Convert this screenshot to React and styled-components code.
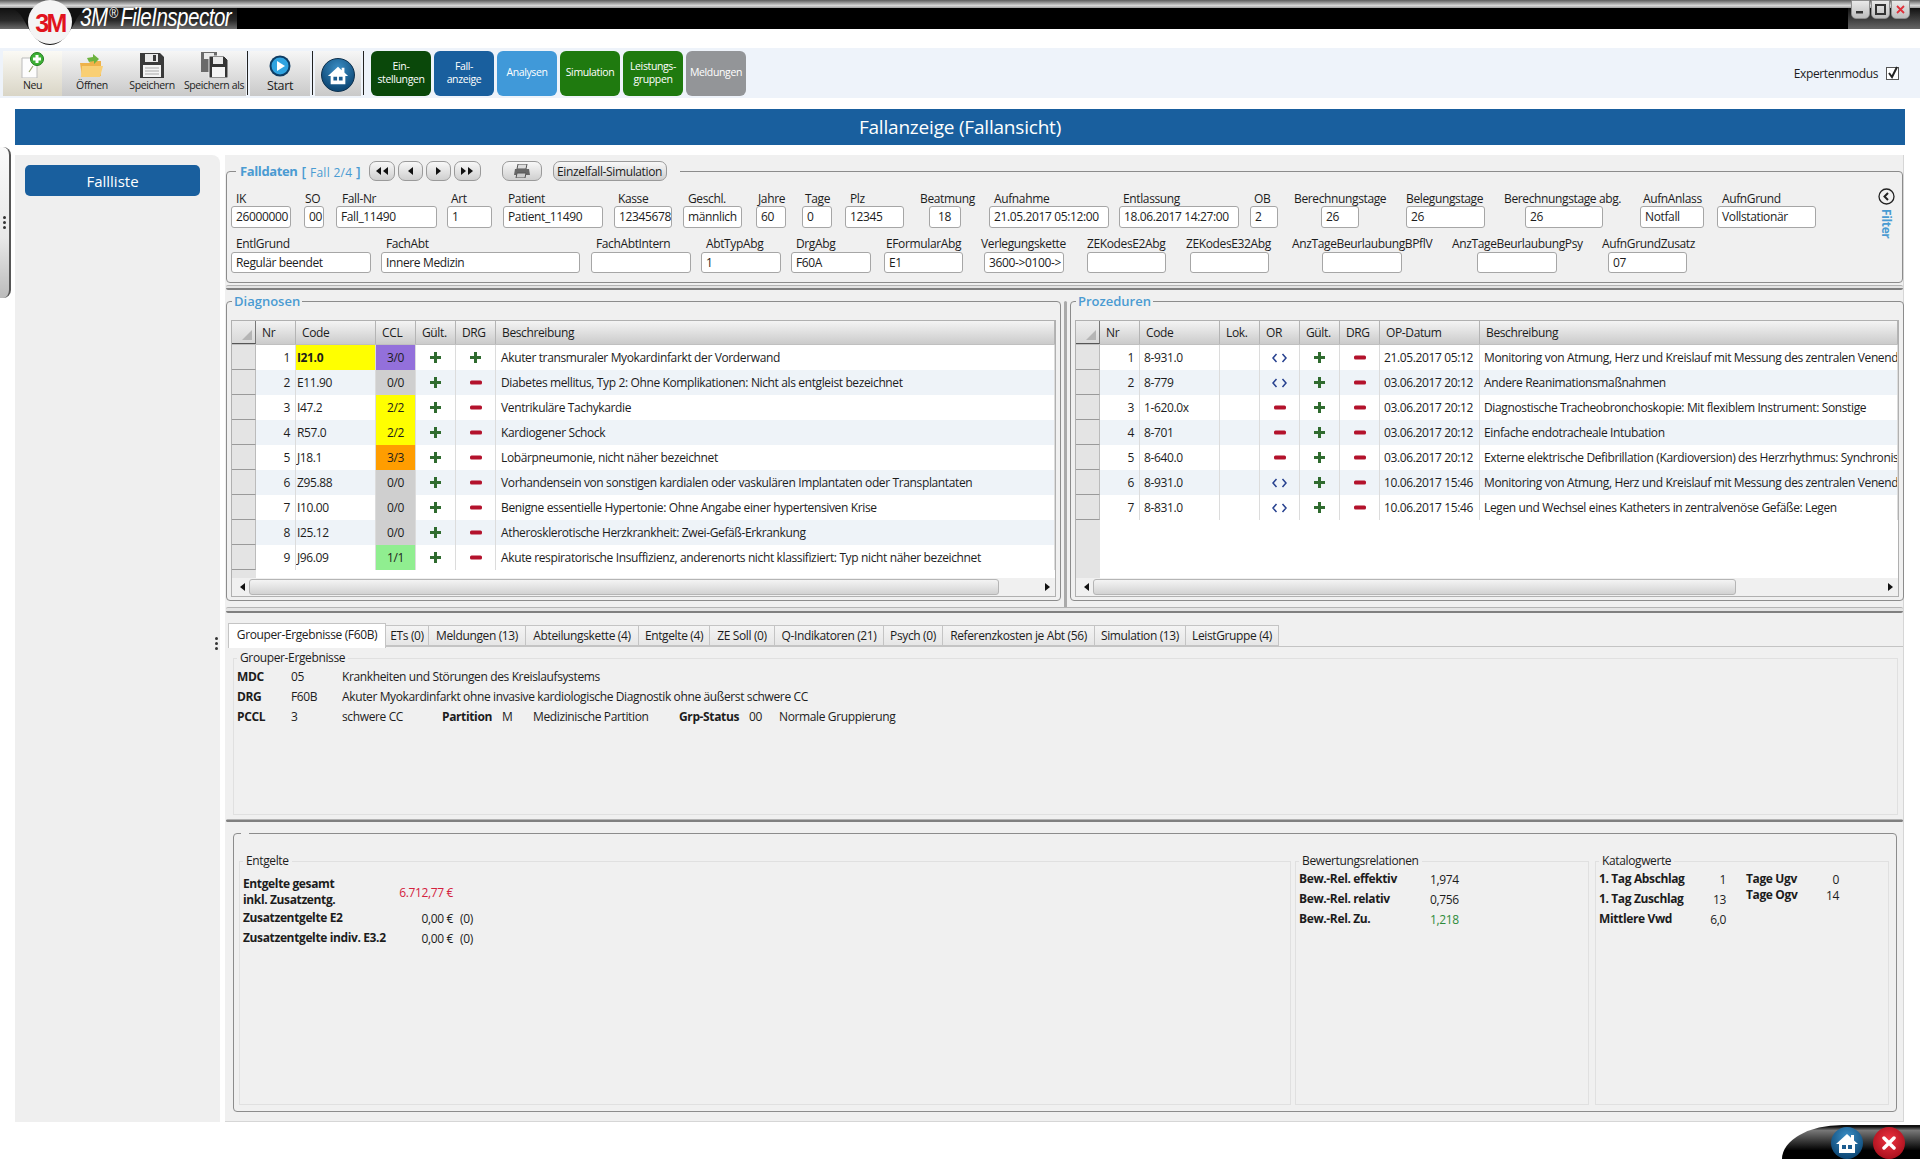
import React from 'react';
import styled, { createGlobalStyle } from 'styled-components';

const GlobalStyle = createGlobalStyle`
  html, body {
    margin: 0;
    padding: 0;
    background: #fff;
  }
  body {
    font-family: "Open Sans", "Liberation Sans", sans-serif;
    font-size: 12px;
    letter-spacing: -0.37px;
    color: #1c1c1c;
  }
  * {
    box-sizing: border-box;
  }
`;

// Window chrome
const Page = styled.div`
  position: relative;
  width: 1920px;
  height: 1159px;
  overflow: hidden;
  background: #fff;
`;

const TitleBar = styled.div`
  position: relative;
  height: 48px;
`;

const TitleStrip = styled.div`
  height: 8px;
  background: linear-gradient(#5a5a5a, #d8d8d8 70%, #9a9a9a);
`;

const TitleBand = styled.div`
  height: 21px;
  display: flex;
  justify-content: space-between;
  background: #000;
`;

const TitleLeft = styled.div`
  width: 237px;
  background: linear-gradient(#111, #2a2a2a 60%, #6a6a6a);
`;

const TitleRight = styled.div`
  width: 72px;
  background: linear-gradient(#111, #666);
`;

const LogoShape = styled.svg`
  position: absolute;
  left: 0;
  top: 0;
`;

const LogoText = styled.span`
  position: absolute;
  left: 31px;
  top: 9px;
  width: 38px;
  text-align: center;
  font-family: "Liberation Sans", sans-serif;
  font-size: 25px;
  line-height: 28px;
  font-weight: 700;
  letter-spacing: -2.5px;
  color: #e1141e;
`;

const AppName = styled.span`
  position: absolute;
  left: 80px;
  top: 3px;
  font-family: "Liberation Sans", sans-serif;
  font-style: italic;
  font-size: 25px;
  line-height: 28px;
  letter-spacing: -0.6px;
  color: #fff;
  white-space: nowrap;
  transform: scaleX(0.82);
  transform-origin: left center;

  sup {
    font-size: 15px;
    line-height: 0;
    margin: 0 3px 0 2px;
    vertical-align: 8px;
    font-style: normal;
  }
`;

const WindowButtons = styled.div`
  position: absolute;
  right: 10px;
  top: 0;
  display: flex;
  gap: 1px;
`;

const WindowButton = styled.div`
  width: 19px;
  height: 19px;
  border-radius: 0 0 5px 5px;
  background: linear-gradient(#e9e9e9, #bdbdbd);
  border: 1px solid #8d8d8d;
  display: flex;
  align-items: center;
  justify-content: center;
`;

// Toolbar
const Toolbar = styled.div`
  height: 50px;
  display: flex;
  align-items: center;
  padding-left: 3px;
  background: #eef3fa;
`;

const ToolButton = styled.div`
  width: ${(p) => p.$w}px;
  height: 45px;
  margin-top: 1px;
  display: flex;
  flex-direction: column;
  align-items: center;
  justify-content: flex-end;
  padding-bottom: 4px;
  font-size: ${(p) => p.$fs || 10.5}px;
  line-height: 13px;
  white-space: nowrap;
  background: ${(p) => p.$bg || 'linear-gradient(#f6f6f6, #c9c9c9)'};

  svg {
    margin-bottom: ${(p) => p.$iconGap || 1}px;
  }
`;

const ToolSep = styled.div`
  width: 1px;
  height: 44px;
  margin: 0 ${(p) => p.$right}px 0 ${(p) => p.$left}px;
  background: #222;
`;

const NavButton = styled.div`
  width: 60px;
  height: 45px;
  margin-right: 3px;
  border-radius: 6px;
  display: flex;
  align-items: center;
  justify-content: center;
  text-align: center;
  font-size: 10.5px;
  line-height: 13.5px;
  color: #fff;
  background: ${(p) => p.$bg};
`;

const ExpertMode = styled.div`
  margin-left: auto;
  margin-right: 21px;
  display: flex;
  align-items: center;
  gap: 8px;
  font-size: 12px;
`;

const Banner = styled.div`
  margin: 11px 15px 0;
  height: 36px;
  display: flex;
  align-items: center;
  justify-content: center;
  background: #195f9e;
  color: #fff;
  font-size: 19px;
  letter-spacing: -0.2px;
`;

// Body
const Body = styled.div`
  display: flex;
  height: 967px;
  margin: 10px 0 0 15px;
  gap: 5px;
`;

const Sidebar = styled.aside`
  position: relative;
  flex: none;
  width: 205px;
  padding: 10px;
  background: #efefef;
  border-top-right-radius: 8px;
`;

const SidebarButton = styled.div`
  width: 175px;
  height: 31px;
  display: flex;
  align-items: center;
  justify-content: center;
  border-radius: 5px;
  background: #195f9e;
  color: #fff;
  font-size: 15px;
  letter-spacing: 0;
`;

const Handle = styled.div`
  position: absolute;
  left: 0;
  top: 147px;
  width: 11px;
  height: 151px;
  border-radius: 0 8px 8px 0;
  border-right: 2px solid #555;
  background: linear-gradient(#fafafa, #e8e8e8 60%, #bbb);
  display: flex;
  align-items: center;
  justify-content: center;
`;

const Dots = styled.div`
  display: flex;
  flex-direction: column;
  gap: 2px;

  i {
    width: ${(p) => p.$s || 2}px;
    height: ${(p) => p.$s || 2}px;
    border-radius: 50%;
    background: #333;
  }
`;

const SideDots = styled.div`
  position: absolute;
  right: -1px;
  top: 482px;
  width: 6px;
`;

const Main = styled.main`
  flex: none;
  width: 1679px;
  display: flex;
  flex-direction: column;
  padding: 6px 0 0 1px;
  background: #f0f0f0;
  border-right: 1px solid #d6d6d6;
  border-bottom: 1px solid #d6d6d6;
`;

const Group = styled.fieldset`
  position: relative;
  flex: none;
  min-width: 0;
  margin: 0;
  height: ${(p) => p.$h}px;
  width: ${(p) => p.$w}px;
  padding: 0 4px 3px;
  border: 1px solid #8c8c8c;
  border-radius: 4px;
`;

const GroupLegend = styled.legend`
  padding: 0 2px;
  margin-left: 1px;
  height: 18px;
  line-height: 18px;
  font-size: 13px;
  font-weight: 600;
  letter-spacing: 0;
  color: #4a9bd2;
`;

// Falldaten
const FallLegend = styled.legend`
  margin-left: 5px;
  padding: 0 13px 0 4px;
  height: 20px;
  display: flex;
  align-items: center;
`;

const FallTitle = styled.span`
  font-size: 13px;
  font-weight: 700;
  color: #4a9bd2;
`;

const FallCount = styled.span`
  margin-left: 4px;
  color: #4a9bd2;
  font-size: 12px;
  letter-spacing: 0.3px;
  width: 67px;
  white-space: nowrap;

  b {
    font-weight: 600;
    font-size: 14px;
  }
`;

const RoundButton = styled.div`
  width: ${(p) => p.$w}px;
  height: 20px;
  margin-left: ${(p) => p.$ml || 0}px;
  border: 1px solid #9a9a9a;
  border-radius: 7px;
  background: linear-gradient(#f8f8f8, #cfcfcf);
  display: flex;
  align-items: center;
  justify-content: center;
  gap: 2px;
  font-size: 12px;
  white-space: nowrap;
`;

const FieldRow = styled.div`
  display: flex;
  margin-top: ${(p) => p.$mt}px;
`;

const Field = styled.div`
  flex: 0 0 ${(p) => p.$w}px;
  min-width: 0;
  margin-left: ${(p) => p.$ml}px;
`;

const FieldLabel = styled.div`
  height: ${(p) => p.$h}px;
  line-height: 16px;
  margin-left: ${(p) => p.$lx}px;
  white-space: nowrap;
`;

const FieldInput = styled.div`
  height: ${(p) => p.$h}px;
  line-height: ${(p) => p.$h - 2}px;
  padding-left: ${(p) => p.$pad}px;
  border: 1px solid #a6a6a6;
  border-radius: 3px;
  background: #fff;
  overflow: hidden;
  white-space: nowrap;
`;

const FilterBox = styled.div`
  position: absolute;
  right: 7px;
  top: 7px;
  width: 18px;
  display: flex;
  flex-direction: column;
  align-items: center;
  gap: 4px;
`;

const FilterText = styled.span`
  writing-mode: vertical-rl;
  font-size: 12px;
  font-weight: 700;
  color: #4a9bd2;
`;

const Splitter = styled.div`
  flex: none;
  height: ${(p) => p.$h}px;
  margin-top: ${(p) => p.$mt}px;
  border-radius: 2px;
  border-top: 1px solid #b4b4b4;
  border-bottom: 2px solid #808080;
  background: #e4e4e4;
`;

const PanelRow = styled.div`
  display: flex;
  margin-top: 2px;
  height: 309px;
  flex: none;
`;

const VSplit = styled.div`
  width: 9px;
  flex: none;
  display: flex;
  justify-content: center;

  &::after {
    content: '';
    width: 3px;
    height: 100%;
    margin-top: 9px;
    border-radius: 2px;
    background: #aaa;
  }
`;

// Data grids
const GridBox = styled.div`
  height: 277px;
  margin-top: 10px;
  display: flex;
  flex-direction: column;
  border: 1px solid #b0b0b0;
  background: #fff;
`;

const Row = styled.div`
  display: grid;
  grid-template-columns: ${(p) => p.$cols};
  height: 25px;
  flex: none;
  background: ${(p) => (p.$alt ? '#eef3f8' : '#fff')};
`;

const HeadRow = styled(Row)`
  height: 24px;
  background: linear-gradient(#f4f4f4, #cbcbcb);
  border-bottom: 1px solid #c0c0c0;
`;

const Corner = styled.div`
  position: relative;
  background: linear-gradient(#eee, #d8d8d8);
  border-right: 1px solid #777;
  border-bottom: 1px solid #555;

  &::after {
    content: '';
    position: absolute;
    right: 3px;
    bottom: 3px;
    border-style: solid;
    border-width: 0 0 10px 10px;
    border-color: transparent transparent #b5b5b5 transparent;
  }
`;

const HeadCell = styled.div`
  padding-left: 6px;
  line-height: 23px;
  border-right: 1px solid #b4b4b4;
  white-space: nowrap;
  overflow: hidden;
`;

const RowHead = styled.div`
  background: #e4e4e4;
  border-right: 1px solid #bbb;
  border-bottom: 1px solid #9a9a9a;
`;

const Cell = styled.div`
  display: flex;
  align-items: center;
  justify-content: ${(p) => p.$justify || 'flex-start'};
  padding: ${(p) => p.$pad || '0 0 0 4px'};
  border-right: 1px solid #dcdcdc;
  background: ${(p) => p.$bg || 'transparent'};
  font-weight: ${(p) => (p.$bold ? 700 : 400)};
  white-space: nowrap;
  overflow: hidden;
`;

const GridFiller = styled.div`
  flex: 1;
  display: flex;
`;

const FillerHead = styled.div`
  width: 24px;
  background: #e4e4e4;
`;

const ScrollBar = styled.div`
  height: 18px;
  flex: none;
  display: flex;
  align-items: center;
  background: #f0f0f0;
  padding: 0 5px 0 8px;
`;

const ScrollTrack = styled.div`
  flex: 1;
  height: 16px;
  margin: 0 4px;
`;

const ScrollThumb = styled.div`
  height: 100%;
  width: ${(p) => p.$w}px;
  border: 1px solid #b5b5b5;
  border-radius: 3px;
  background: linear-gradient(#f4f4f4, #d2d2d2);
`;

// Tabs
const TabStrip = styled.div`
  display: flex;
  flex: none;
  align-items: flex-end;
  height: 23px;
  margin: 11px 0 0 2px;
  border-bottom: 1px solid #c4c4c4;
`;

const Tab = styled.div`
  width: ${(p) => p.$w}px;
  height: ${(p) => (p.$active ? 25 : 21)}px;
  margin-bottom: ${(p) => (p.$active ? -2 : 0)}px;
  line-height: ${(p) => (p.$active ? 22 : 20)}px;
  text-align: center;
  white-space: nowrap;
  position: relative;
  border: 1px solid #c4c4c4;
  border-left-width: ${(p) => (p.$active ? 1 : 0)}px;
  border-bottom: ${(p) => (p.$active ? 'none' : '1px solid #c4c4c4')};
  background: ${(p) => (p.$active ? '#fff' : 'linear-gradient(#f4f4f4, #e6e6e6)')};
`;

const TabPane = styled.div`
  flex: none;
  height: 169px;
  padding: 3px 5px 0 7px;
`;

const SoftGroup = styled.fieldset`
  flex: none;
  min-width: 0;
  margin: 0 0 0 ${(p) => p.$ml || 0}px;
  padding: 0 3px;
  height: ${(p) => p.$h}px;
  width: ${(p) => p.$w || 'auto'};
  border: 1px solid #e0e0e0;
`;

const SoftLegend = styled.legend`
  padding: 0 3px;
  margin-left: 0;
  line-height: 16px;
  height: 16px;
`;

const ResultRow = styled.div`
  display: flex;
  height: 20px;
  align-items: center;
  white-space: nowrap;
`;

const ResultCell = styled.div`
  flex: 0 0 ${(p) => p.$w}px;
  font-weight: ${(p) => (p.$bold ? 700 : 400)};
`;

// Lower box
const SumBox = styled.fieldset`
  flex: none;
  min-width: 0;
  height: 279px;
  margin: 11px 6px 0 7px;
  padding: 19px 5px 0;
  border: 1px solid #8c8c8c;
  border-radius: 4px;
`;

const EmptyLegend = styled.legend`
  width: 8px;
  height: 0;
  padding: 0;
  margin-left: 2px;
`;

const SumColumns = styled.div`
  display: flex;
  height: 252px;
`;

const TextLine = styled.div`
  display: flex;
  align-items: center;
  height: ${(p) => p.$h || 20}px;
  margin-top: ${(p) => p.$mt || 0}px;
  white-space: nowrap;
`;

const Label = styled.div`
  flex: 0 0 ${(p) => p.$w}px;
  font-weight: 700;
  line-height: 16px;
`;

const Value = styled.div`
  flex: 0 0 ${(p) => p.$w}px;
  text-align: right;
  color: ${(p) => p.$color || 'inherit'};
`;

const Extra = styled.div`
  margin-left: 7px;
`;

const CatalogRows = styled.div`
  display: flex;
`;

const CatalogCol = styled.div`
  margin-left: ${(p) => p.$ml || 0}px;
  padding-top: ${(p) => p.$pt || 0}px;
`;

// Footer
const Footer = styled.div`
  position: absolute;
  right: 0;
  bottom: 0;
  width: 138px;
  height: 34px;
  border-top-left-radius: 60px 34px;
  background: linear-gradient(#111 5%, #777 16%, #000 75%);
  display: flex;
  justify-content: flex-end;
  align-items: flex-start;
  gap: 10px;
  padding: 2px 15px 0 0;
`;

const RoundIcon = styled.div`
  width: 32px;
  height: 32px;
  border-radius: 50%;
  display: flex;
  align-items: center;
  justify-content: center;
  background: ${(p) => p.$bg};
`;

const HomeButtonIcon = styled.div`
  width: 34px;
  height: 34px;
  border-radius: 50%;
  display: flex;
  align-items: center;
  justify-content: center;
  border: 1px solid #0c2f4c;
  background: radial-gradient(circle at 50% 30%, #3b8fc6, #0f4a78 75%);
`;

const Plus = () => (
  <svg width="11" height="11" viewBox="0 0 11 11">
    <path d="M4 0h3v4h4v3H7v4H4V7H0V4h4z" fill="#2f6b2f" />
  </svg>
);

const Minus = () => (
  <svg width="12" height="5" viewBox="0 0 12 5">
    <rect width="12" height="4" y="0.5" rx="1.5" fill="#b3122c" />
  </svg>
);

const Brackets = () => (
  <svg width="15" height="10" viewBox="0 0 15 10" fill="none" stroke="#26408f" strokeWidth="1.5">
    <path d="M4.5 1L1 5l3.5 4M10.5 1L14 5l-3.5 4" />
  </svg>
);

const Triangle = ({ dir }) => (
  <svg width="5" height="8" viewBox="0 0 5 8">
    <path d={dir === 'left' ? 'M5 0v8L0 4z' : 'M0 0v8l5-4z'} fill="#111" />
  </svg>
);

const NewIcon = () => (
  <svg width="26" height="26" viewBox="0 0 26 26">
    <path d="M2 6h15v20H2z" fill="#fdfdfd" stroke="#bbb" />
    <path d="M9 20l4-6" stroke="#9aa870" strokeWidth="1.2" />
    <circle cx="17" cy="7" r="6.5" fill="#3eb135" stroke="#1f7d1c" />
    <path d="M15.5 3h3v2.5H21v3h-2.5V11h-3V8.500H13v-3h2.500z" fill="#fff" />
  </svg>
);

const OpenIcon = () => (
  <svg width="26" height="26" viewBox="0 0 26 26">
    <path d="M1 11h9l2-2h10v15H3z" fill="#eeb24a" />
    <path d="M3 14h21l-3 11H2z" fill="#f9cf74" />
    <path d="M8 6l6-1V2l6 5-5 5V9l-5 1z" fill="#6db33f" />
  </svg>
);

const DiskIcon = () => (
  <svg width="24" height="25" viewBox="0 0 24 25">
    <path d="M0 0h20l4 4v21H0z" fill="#3a3a3a" />
    <path d="M5 1h13v8H5z" fill="#e9e9e9" />
    <path d="M13 2h3v6h-3z" fill="#3a3a3a" />
    <path d="M3 12h18v12H3z" fill="#f4f4f4" />
    <path d="M5 15h14M5 18h14M5 21h14" stroke="#aaa" />
  </svg>
);

const DoubleDiskIcon = () => (
  <svg width="27" height="26" viewBox="0 0 27 26">
    <path d="M0 0h16v20H0z" fill="#6a6a6a" />
    <path d="M3 1h10v6H3z" fill="#e9e9e9" />
    <path d="M8 4h15l4 4v18H8z" fill="#333" stroke="#eee" />
    <path d="M12 5h10v7H12z" fill="#e9e9e9" />
    <path d="M11 15h13v10H11z" fill="#f4f4f4" />
  </svg>
);

const PlayIcon = () => (
  <svg width="22" height="22" viewBox="0 0 22 22">
    <circle cx="11" cy="11" r="10.500" fill="#0e3c63" />
    <circle cx="11" cy="11" r="8.500" fill="#2fa3e0" />
    <path d="M8 6l8 5-8 5z" fill="#fff" />
  </svg>
);

const HomeGlyph = ({ size }) => (
  <svg width={size} height={size} viewBox="0 0 24 24">
    <path d="M12 3L1 13h3v9h16v-9h3l-4-3.600V4h-3v2.700z" fill="#fff" />
    <path d="M7 14h4v4H7zM13 14h4v4h-4z" fill="#1a5c90" />
  </svg>
);

const PrintIcon = () => (
  <svg width="18" height="14" viewBox="0 0 18 14">
    <path d="M5 0h9l-1 5H4z" fill="#ddd" stroke="#555" />
    <path d="M2 5h14l1 6H1z" fill="#666" />
    <path d="M4 9h9l-1 5H3z" fill="#ccc" stroke="#555" />
  </svg>
);

const NavArrows = ({ dir, count }) => (
  <>
    {Array.from({ length: count }).map((_, i) => (
      <Triangle dir={dir} key={i} />
    ))}
  </>
);

const rowOne = [
  { label: 'IK', value: '26000000', x: 231, w: 60, lx: 5 },
  { label: 'SO', value: '00', x: 304, w: 20, lx: 1 },
  { label: 'Fall-Nr', value: 'Fall_11490', x: 336, w: 101, lx: 6 },
  { label: 'Art', value: '1', x: 447, w: 45, lx: 4 },
  { label: 'Patient', value: 'Patient_11490', x: 503, w: 100, lx: 5 },
  { label: 'Kasse', value: '12345678', x: 614, w: 58, lx: 4 },
  { label: 'Geschl.', value: 'männlich', x: 683, w: 59, lx: 5 },
  { label: 'Jahre', value: '60', x: 756, w: 30, lx: 2 },
  { label: 'Tage', value: '0', x: 802, w: 30, lx: 3 },
  { label: 'Plz', value: '12345', x: 845, w: 59, lx: 5 },
  { label: 'Beatmung', value: '18', x: 929, w: 32, lx: -9, pad: 8 },
  { label: 'Aufnahme', value: '21.05.2017 05:12:00', x: 989, w: 120, lx: 5 },
  { label: 'Entlassung', value: '18.06.2017 14:27:00', x: 1119, w: 120, lx: 4 },
  { label: 'OB', value: '2', x: 1250, w: 28, lx: 4 },
  { label: 'Berechnungstage', value: '26', x: 1321, w: 38, lx: -27 },
  { label: 'Belegungstage', value: '26', x: 1406, w: 79, lx: 0 },
  { label: 'Berechnungstage abg.', value: '26', x: 1525, w: 78, lx: -21 },
  { label: 'AufnAnlass', value: 'Notfall', x: 1640, w: 64, lx: 3 },
  { label: 'AufnGrund', value: 'Vollstationär', x: 1717, w: 99, lx: 5 },
];

const rowTwo = [
  { label: 'EntlGrund', value: 'Regulär beendet', x: 231, w: 140, lx: 5 },
  { label: 'FachAbt', value: 'Innere Medizin', x: 381, w: 199, lx: 5 },
  { label: 'FachAbtIntern', value: '', x: 591, w: 100, lx: 5 },
  { label: 'AbtTypAbg', value: '1', x: 701, w: 80, lx: 5 },
  { label: 'DrgAbg', value: 'F60A', x: 791, w: 80, lx: 5 },
  { label: 'EFormularAbg', value: 'E1', x: 884, w: 79, lx: 2 },
  { label: 'Verlegungskette', value: '3600->0100->', x: 984, w: 80, lx: -3 },
  { label: 'ZEKodesE2Abg', value: '', x: 1087, w: 79, lx: 0 },
  { label: 'ZEKodesE32Abg', value: '', x: 1190, w: 79, lx: -4 },
  { label: 'AnzTageBeurlaubungBPflV', value: '', x: 1322, w: 80, lx: -30 },
  { label: 'AnzTageBeurlaubungPsy', value: '', x: 1477, w: 80, lx: -25 },
  { label: 'AufnGrundZusatz', value: '07', x: 1608, w: 79, lx: -6 },
];

const diagCols = '24px 40px 80px 40px 40px 40px 1fr';
const procCols = '24px 40px 80px 40px 40px 40px 40px 100px 1fr';

const diagHeaders = ['Nr', 'Code', 'CCL', 'Gült.', 'DRG', 'Beschreibung'];
const procHeaders = ['Nr', 'Code', 'Lok.', 'OR', 'Gült.', 'DRG', 'OP-Datum', 'Beschreibung'];

const diagnoses = [
  ['I21.0', '3/0', '#9370db', 'Akuter transmuraler Myokardinfarkt der Vorderwand'],
  ['E11.90', '0/0', '#cfcfcf', 'Diabetes mellitus, Typ 2: Ohne Komplikationen: Nicht als entgleist bezeichnet'],
  ['I47.2', '2/2', '#ffff00', 'Ventrikuläre Tachykardie'],
  ['R57.0', '2/2', '#ffff00', 'Kardiogener Schock'],
  ['J18.1', '3/3', '#ff9d00', 'Lobärpneumonie, nicht näher bezeichnet'],
  ['Z95.88', '0/0', '#cfcfcf', 'Vorhandensein von sonstigen kardialen oder vaskulären Implantaten oder Transplantaten'],
  ['I10.00', '0/0', '#cfcfcf', 'Benigne essentielle Hypertonie: Ohne Angabe einer hypertensiven Krise'],
  ['I25.12', '0/0', '#cfcfcf', 'Atherosklerotische Herzkrankheit: Zwei-Gefäß-Erkrankung'],
  ['J96.09', '1/1', '#90ee90', 'Akute respiratorische Insuffizienz, anderenorts nicht klassifiziert: Typ nicht näher bezeichnet'],
];

const procedures = [
  ['8-931.0', true, '21.05.2017 05:12', 'Monitoring von Atmung, Herz und Kreislauf mit Messung des zentralen Venendruckes'],
  ['8-779', true, '03.06.2017 20:12', 'Andere Reanimationsmaßnahmen'],
  ['1-620.0x', false, '03.06.2017 20:12', 'Diagnostische Tracheobronchoskopie: Mit flexiblem Instrument: Sonstige'],
  ['8-701', false, '03.06.2017 20:12', 'Einfache endotracheale Intubation'],
  ['8-640.0', false, '03.06.2017 20:12', 'Externe elektrische Defibrillation (Kardioversion) des Herzrhythmus: Synchronisiert'],
  ['8-931.0', true, '10.06.2017 15:46', 'Monitoring von Atmung, Herz und Kreislauf mit Messung des zentralen Venendruckes'],
  ['8-831.0', true, '10.06.2017 15:46', 'Legen und Wechsel eines Katheters in zentralvenöse Gefäße: Legen'],
];

const tabs = [
  ['Grouper-Ergebnisse (F60B)', 158],
  ['ETs (0)', 43],
  ['Meldungen (13)', 97],
  ['Abteilungskette (4)', 113],
  ['Entgelte (4)', 71],
  ['ZE Soll (0)', 65],
  ['Q-Indikatoren (21)', 109],
  ['Psych (0)', 59],
  ['Referenzkosten je Abt (56)', 152],
  ['Simulation (13)', 91],
  ['LeistGruppe (4)', 93],
];

const FieldLine = ({ fields, mt, labelH, inputH }) => (
  <FieldRow $mt={mt}>
    {fields.map((f, i) => {
      const prevEnd = i === 0 ? 231 : fields[i - 1].x + fields[i - 1].w;
      return (
        <Field key={f.label} $w={f.w} $ml={f.x - prevEnd}>
          <FieldLabel $h={labelH} $lx={f.lx}>{f.label}</FieldLabel>
          <FieldInput $h={inputH} $pad={f.pad || 4}>{f.value}</FieldInput>
        </Field>
      );
    })}
  </FieldRow>
);

const GridScroll = ({ thumbW }) => (
  <ScrollBar>
    <Triangle dir="left" />
    <ScrollTrack>
      <ScrollThumb $w={thumbW} />
    </ScrollTrack>
    <Triangle dir="right" />
  </ScrollBar>
);

const App = () => (
  <Page>
    <GlobalStyle />
    <TitleBar>
      <TitleStrip />
      <TitleBand>
        <TitleLeft />
        <TitleRight />
      </TitleBand>
      <LogoShape width="110" height="48" viewBox="0 0 110 48">
        <path d="M0 8h5c10 0 14 3 20 14 6 11 13 23 25 23s19-12 25-23C80 11 86 8 100 8z" fill="#111" />
        <ellipse cx="50" cy="22" rx="22" ry="22" fill="#f4f4f4" />
      </LogoShape>
      <LogoText>3M</LogoText>
      <AppName>3M<sup>®</sup>FileInspector</AppName>
      <WindowButtons>
        <WindowButton>
          <svg width="9" height="9" viewBox="0 0 9 9"><rect y="6" width="7" height="2.500" fill="#333" /></svg>
        </WindowButton>
        <WindowButton>
          <svg width="11" height="11" viewBox="0 0 11 11"><rect x="1" y="1" width="9" height="9" fill="none" stroke="#333" strokeWidth="2" /></svg>
        </WindowButton>
        <WindowButton>
          <svg width="9" height="9" viewBox="0 0 9 9"><path d="M1 1l7 7M8 1L1 8" stroke="#e0303a" strokeWidth="1.800" /></svg>
        </WindowButton>
      </WindowButtons>
    </TitleBar>

    <Toolbar>
      <ToolButton $w={59} $bg="linear-gradient(#fbfaf5, #d9d5c6)"><NewIcon />Neu</ToolButton>
      <ToolButton $w={60}><OpenIcon />Öffnen</ToolButton>
      <ToolButton $w={60}><DiskIcon />Speichern</ToolButton>
      <ToolButton $w={64}><DoubleDiskIcon />Speichern als</ToolButton>
      <ToolSep $left={1} $right={2} />
      <ToolButton $w={60} $fs={12.5} $iconGap={2}><PlayIcon />Start</ToolButton>
      <ToolSep $left={2} $right={2} />
      <ToolButton $w={46}>
        <HomeButtonIcon><HomeGlyph size={22} /></HomeButtonIcon>
      </ToolButton>
      <ToolSep $left={2} $right={7} />
      <NavButton $bg="#0a480a">Ein-<br />stellungen</NavButton>
      <NavButton $bg="#195f9e">Fall-<br />anzeige</NavButton>
      <NavButton $bg="#4099d9">Analysen</NavButton>
      <NavButton $bg="#1f7a0f">Simulation</NavButton>
      <NavButton $bg="#1f7a0f">Leistungs-<br />gruppen</NavButton>
      <NavButton $bg="#939598">Meldungen</NavButton>
      <ExpertMode>
        Expertenmodus
        <svg width="13" height="14" viewBox="0 0 13 14">
          <rect x="0.500" y="1.500" width="12" height="12" fill="#fff" stroke="#555" />
          <path d="M3 7l3 4 5-10" fill="none" stroke="#222" strokeWidth="2" />
        </svg>
      </ExpertMode>
    </Toolbar>

    <Banner>Fallanzeige (Fallansicht)</Banner>

    <Body>
      <Sidebar>
        <SidebarButton>Fallliste</SidebarButton>
        <SideDots>
          <Dots $s={3}><i /><i /><i /></Dots>
        </SideDots>
      </Sidebar>

      <Main>
        <Group $h={122} $w={1677}>
          <FallLegend>
            <FallTitle>Falldaten</FallTitle>
            <FallCount><b>[</b> Fall 2/4 <b>]</b></FallCount>
            <RoundButton $w={26}><NavArrows dir="left" count={2} /></RoundButton>
            <RoundButton $w={25} $ml={3}><NavArrows dir="left" count={1} /></RoundButton>
            <RoundButton $w={25} $ml={3}><NavArrows dir="right" count={1} /></RoundButton>
            <RoundButton $w={27} $ml={3}><NavArrows dir="right" count={2} /></RoundButton>
            <RoundButton $w={40} $ml={21}><PrintIcon /></RoundButton>
            <RoundButton $w={114} $ml={11}>Einzelfall-Simulation</RoundButton>
          </FallLegend>
          <FieldLine fields={rowOne} mt={10} labelH={15} inputH={22} />
          <FieldLine fields={rowTwo} mt={8} labelH={16} inputH={21} />
          <FilterBox>
            <svg width="17" height="17" viewBox="0 0 17 17" fill="none" stroke="#222">
              <circle cx="8.500" cy="8.500" r="7.500" strokeWidth="1.300" />
              <path d="M10 5L6.500 8.500 10 12" strokeWidth="2" />
            </svg>
            <FilterText>Filter</FilterText>
          </FilterBox>
        </Group>

        <Splitter $h={5} $mt={2} />

        <PanelRow>
          <Group $h={309} $w={835}>
            <GroupLegend>Diagnosen</GroupLegend>
            <GridBox>
              <HeadRow $cols={diagCols}>
                <Corner />
                {diagHeaders.map((h) => <HeadCell key={h}>{h}</HeadCell>)}
              </HeadRow>
              {diagnoses.map((d, i) => (
                <Row key={d[0]} $cols={diagCols} $alt={i % 2 === 1}>
                  <RowHead />
                  <Cell $justify="flex-end" $pad="0 5px 0 0">{i + 1}</Cell>
                  <Cell $pad="0 0 0 1px" $bg={i === 0 ? '#ffff00' : undefined} $bold={i === 0}>{d[0]}</Cell>
                  <Cell $justify="center" $pad="0" $bg={d[2]}>{d[1]}</Cell>
                  <Cell $justify="center" $pad="0"><Plus /></Cell>
                  <Cell $justify="center" $pad="0">{i === 0 ? <Plus /> : <Minus />}</Cell>
                  <Cell $pad="0 0 0 5px">{d[3]}</Cell>
                </Row>
              ))}
              <GridFiller><FillerHead /></GridFiller>
              <GridScroll thumbW={750} />
            </GridBox>
          </Group>

          <VSplit />

          <Group $h={309} $w={834}>
            <GroupLegend>Prozeduren</GroupLegend>
            <GridBox>
              <HeadRow $cols={procCols}>
                <Corner />
                {procHeaders.map((h) => <HeadCell key={h}>{h}</HeadCell>)}
              </HeadRow>
              {procedures.map((p, i) => (
                <Row key={i} $cols={procCols} $alt={i % 2 === 1}>
                  <RowHead />
                  <Cell $justify="flex-end" $pad="0 5px 0 0">{i + 1}</Cell>
                  <Cell $pad="0 0 0 4px">{p[0]}</Cell>
                  <Cell />
                  <Cell $justify="center" $pad="0">{p[1] ? <Brackets /> : <Minus />}</Cell>
                  <Cell $justify="center" $pad="0"><Plus /></Cell>
                  <Cell $justify="center" $pad="0"><Minus /></Cell>
                  <Cell>{p[2]}</Cell>
                  <Cell>{p[3]}</Cell>
                </Row>
              ))}
              <GridFiller><FillerHead /></GridFiller>
              <GridScroll thumbW={643} />
            </GridBox>
          </Group>
        </PanelRow>

        <Splitter $h={6} $mt={6} />

        <TabStrip>
          {tabs.map(([name, w], i) => (
            <Tab key={name} $w={w} $active={i === 0}>{name}</Tab>
          ))}
        </TabStrip>

        <TabPane>
          <SoftGroup $h={165}>
            <SoftLegend>Grouper-Ergebnisse</SoftLegend>
            <ResultRow>
              <ResultCell $w={54} $bold>MDC</ResultCell>
              <ResultCell $w={51}>05</ResultCell>
              <ResultCell $w={400}>Krankheiten und Störungen des Kreislaufsystems</ResultCell>
            </ResultRow>
            <ResultRow>
              <ResultCell $w={54} $bold>DRG</ResultCell>
              <ResultCell $w={51}>F60B</ResultCell>
              <ResultCell $w={600}>Akuter Myokardinfarkt ohne invasive kardiologische Diagnostik ohne äußerst schwere CC</ResultCell>
            </ResultRow>
            <ResultRow>
              <ResultCell $w={54} $bold>PCCL</ResultCell>
              <ResultCell $w={51}>3</ResultCell>
              <ResultCell $w={100}>schwere CC</ResultCell>
              <ResultCell $w={60} $bold>Partition</ResultCell>
              <ResultCell $w={31}>M</ResultCell>
              <ResultCell $w={146}>Medizinische Partition</ResultCell>
              <ResultCell $w={70} $bold>Grp-Status</ResultCell>
              <ResultCell $w={30}>00</ResultCell>
              <ResultCell $w={200}>Normale Gruppierung</ResultCell>
            </ResultRow>
          </SoftGroup>
        </TabPane>

        <Splitter $h={3} $mt={3} />

        <SumBox>
          <EmptyLegend />
          <SumColumns>
            <SoftGroup $h={252} $w="1052px">
              <SoftLegend>Entgelte</SoftLegend>
              <TextLine $h={32} $mt={7}>
                <Label $w={145}>Entgelte gesamt<br />inkl. Zusatzentg.</Label>
                <Value $w={65} $color="#d4213d">6.712,77 €</Value>
              </TextLine>
              <TextLine>
                <Label $w={145}>Zusatzentgelte E2</Label>
                <Value $w={65}>0,00 €</Value>
                <Extra>(0)</Extra>
              </TextLine>
              <TextLine>
                <Label $w={145}>Zusatzentgelte indiv. E3.2</Label>
                <Value $w={65}>0,00 €</Value>
                <Extra>(0)</Extra>
              </TextLine>
            </SoftGroup>
            <SoftGroup $h={252} $w="294px" $ml={4}>
              <SoftLegend>Bewertungsrelationen</SoftLegend>
              <TextLine><Label $w={131}>Bew.-Rel. effektiv</Label>1,974</TextLine>
              <TextLine><Label $w={131}>Bew.-Rel. relativ</Label>0,756</TextLine>
              <TextLine><Label $w={131}>Bew.-Rel. Zu.</Label><Value $w={28} $color="#2e8b3a">1,218</Value></TextLine>
            </SoftGroup>
            <SoftGroup $h={252} $w="294px" $ml={6}>
              <SoftLegend>Katalogwerte</SoftLegend>
              <CatalogRows>
                <CatalogCol>
                  <TextLine><Label $w={100}>1. Tag Abschlag</Label><Value $w={27}>1</Value></TextLine>
                  <TextLine><Label $w={100}>1. Tag Zuschlag</Label><Value $w={27}>13</Value></TextLine>
                  <TextLine><Label $w={100}>Mittlere Vwd</Label><Value $w={27}>6,0</Value></TextLine>
                </CatalogCol>
                <CatalogCol $ml={20} $pt={2}>
                  <TextLine $h={16}><Label $w={70}>Tage Ugv</Label><Value $w={23}>0</Value></TextLine>
                  <TextLine $h={16}><Label $w={70}>Tage Ogv</Label><Value $w={23}>14</Value></TextLine>
                </CatalogCol>
              </CatalogRows>
            </SoftGroup>
          </SumColumns>
        </SumBox>
      </Main>
    </Body>

    <Handle>
      <Dots $s={3}><i /><i /><i /></Dots>
    </Handle>

    <Footer>
      <RoundIcon $bg="radial-gradient(circle at 50% 30%, #3b8fc6, #0f4a78 75%)"><HomeGlyph size={24} /></RoundIcon>
      <RoundIcon $bg="radial-gradient(circle at 50% 40%, #ee3340, #a80f1c 80%)">
        <svg width="14" height="14" viewBox="0 0 14 14">
          <path d="M2 2l10 10M12 2L2 12" stroke="#fff" strokeWidth="3.500" strokeLinecap="round" />
        </svg>
      </RoundIcon>
    </Footer>
  </Page>
);

export default App;
